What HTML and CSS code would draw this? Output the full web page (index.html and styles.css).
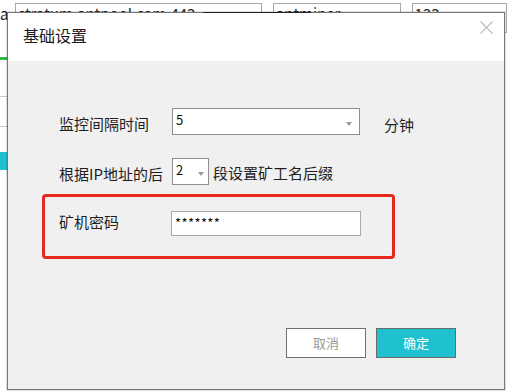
FILE: index.html
```html
<!DOCTYPE html>
<html lang="zh-CN">
<head>
<meta charset="utf-8">
<title>基础设置</title>
<link rel="stylesheet" href="styles.css">
</head>
<body>
<div class="page">
  <div class="topbar">
    <span class="lead">a</span>
    <div class="bginput w1">stratum.antpool.com:443</div>
    <div class="bginput w2">antminer</div>
    <div class="bginput w3">123</div>
  </div>
  <div class="strip">
    <div class="s-green"></div>
    <div class="s-line l1"></div>
    <div class="s-line l2"></div>
    <div class="s-teal"></div>
  </div>
</div>

<div class="dialog">
  <div class="handle"><i></i><i></i></div>
  <div class="head">
    <span class="title">基础设置</span>
    <svg class="close" width="13" height="13" viewBox="0 0 13 13"><path d="M0.5 0.5 L12.5 12.5 M12.5 0.5 L0.5 12.5" stroke="#bdbdbd" stroke-width="1.2" fill="none"/></svg>
  </div>
  <div class="body">
    <div class="row r1">
      <span class="label">监控间隔时间</span>
      <div class="select wide"><span class="val">5</span><b class="arrow"></b></div>
      <span class="unit">分钟</span>
    </div>
    <div class="row r2">
      <span class="label">根据IP地址的后</span>
      <div class="select narrow"><span class="val">2</span><b class="arrow"></b></div>
      <span class="suffix">段设置矿工名后缀</span>
    </div>
    <div class="highlight">
      <span class="label pw">矿机密码</span>
      <div class="input">*******</div>
    </div>
    <div class="footer">
      <button class="btn cancel">取消</button>
      <button class="btn ok">确定</button>
    </div>
  </div>
</div>
</body>
</html>
```
FILE: styles.css
```css
html, body {
  margin: 0;
  padding: 0;
}
body {
  width: 507px;
  height: 392px;
  overflow: hidden;
  background: #ffffff;
  font-family: "Noto Sans CJK SC", "Noto Sans", sans-serif;
  color: #1e1e1e;
  position: relative;
}
.page {
  width: 507px;
  height: 392px;
}
.topbar {
  display: flex;
  padding-top: 3px;
  height: 30px;
}
.lead {
  width: 16px;
  font-size: 15px;
  line-height: 20px;
  padding-top: 1px;
  color: #222;
}
.bginput {
  box-sizing: border-box;
  height: 30px;
  border: 1px solid #a8a8a8;
  font-size: 15px;
  line-height: 20px;
  padding: 0 2px;
  color: #222;
  white-space: nowrap;
  overflow: hidden;
}
.w1 { width: 259px; }
.w2 { width: 134px; margin-left: 11px; }
.w3 { width: 100px; margin-left: 11px; }

.strip {
  width: 40px;
}
.s-green {
  height: 3px;
  margin-top: 24px;
  background: #2eb84a;
}
.s-line {
  height: 1px;
  background: #c8c8c8;
}
.l1 { margin-top: 36px; }
.l2 { margin-top: 29px; }
.s-teal {
  height: 18px;
  margin-top: 25px;
  background: #1fc0cf;
}

.dialog {
  position: absolute;
  left: 7px;
  top: 12px;
  width: 496px;
  height: 376px;
  border: 1px solid #777777;
  background: #f0f0f0;
  box-shadow: 0 0 0 1px rgba(0,0,0,0.12);
  display: flex;
  flex-direction: column;
}
.handle {
  position: absolute;
  top: -1px;
  left: 195px;
  width: 108px;
  height: 11px;
  background: #222222;
}
.handle i {
  position: absolute;
  left: 39px;
  width: 30px;
  height: 1px;
  background: #8c8c8c;
}
.handle i:first-child { top: 3px; }
.handle i:last-child { top: 5px; }

.head {
  position: relative;
  height: 48px;
  background: #ffffff;
  box-sizing: border-box;
  padding: 14px 0 0 15px;
}
.title {
  display: block;
  font-size: 16px;
  line-height: 16px;
  color: #1a1a1a;
}
.close {
  position: absolute;
  right: 11px;
  top: 8px;
  display: block;
}

.body {
  flex: 1;
  padding: 47px 0 0 51px;
  display: flex;
  flex-direction: column;
}
.row {
  display: flex;
  align-items: flex-start;
  height: 27px;
}
.r2 { margin-top: 23px; }
.label {
  width: 113px;
  flex: none;
  font-size: 15px;
  line-height: 15px;
  margin-top: 8px;
  white-space: nowrap;
}
.select {
  position: relative;
  box-sizing: border-box;
  height: 27px;
  border: 1px solid #8e8e8e;
  background: #ffffff;
  flex: none;
}
.wide { width: 188px; }
.narrow { width: 37px; }
.val {
  display: block;
  font-size: 13px;
  line-height: 17px;
  padding: 2px 0 0 3px;
  color: #111;
}
.arrow {
  position: absolute;
  top: 13px;
  width: 0;
  height: 0;
  border-left: 3px solid transparent;
  border-right: 3px solid transparent;
  border-top: 4px solid #9a9a9a;
}
.wide .arrow { right: 7px; }
.narrow .arrow { right: 4px; }
.unit {
  font-size: 15px;
  line-height: 15px;
  margin: 9px 0 0 24px;
}
.suffix {
  font-size: 15px;
  line-height: 15px;
  margin: 7px 0 0 4px;
  white-space: nowrap;
}

.highlight {
  box-sizing: border-box;
  width: 353px;
  height: 65px;
  margin: 9px 0 0 -17px;
  border: 3px solid #e6291f;
  border-radius: 4px;
  padding: 14px 0 0 14px;
  display: flex;
  align-items: flex-start;
}
.label.pw {
  width: 112px;
  margin-top: 3px;
}
.input {
  box-sizing: border-box;
  width: 190px;
  height: 25px;
  border: 1px solid #a9a9a9;
  background: #ffffff;
  font-size: 13px;
  line-height: 17px;
  padding: 2px 0 0 3px;
  color: #111;
  letter-spacing: 0.4px;
}

.footer {
  display: flex;
  justify-content: flex-end;
  gap: 10px;
  margin-top: 69px;
  padding-right: 48px;
}
.btn {
  box-sizing: border-box;
  width: 80px;
  height: 30px;
  border: 1px solid #707070;
  font-family: "Noto Sans CJK SC", "Noto Sans", sans-serif;
  font-size: 13px;
  line-height: 16px;
  padding: 0;
  margin: 0;
}
.cancel {
  background: #ffffff;
  color: #9a9a9a;
}
.ok {
  background: #1fc0cf;
  color: #ffffff;
  border-color: #6a6a6a;
}
```
